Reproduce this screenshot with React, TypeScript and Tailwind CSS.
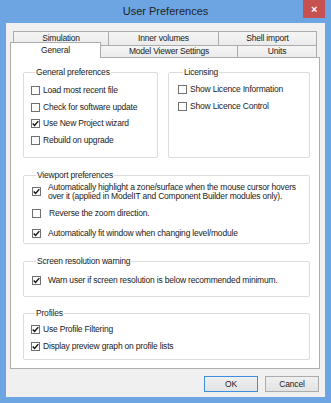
import React from "react";

function Check({ checked }: { checked?: boolean }) {
  return (
    <span className="w-[9px] h-[9px] shrink-0 border border-[#707070] bg-white flex items-center justify-center">
      {checked && (
        <svg width="7" height="7" viewBox="0 0 7 7">
          <path d="M0.7 3.5 L2.6 5.4 L6.3 1.1" fill="none" stroke="#111" strokeWidth="1.4" />
        </svg>
      )}
    </span>
  );
}

function Row({ checked, label, gap = "gap-[3px]", h = "h-[16.7px]" }: { checked?: boolean; label: React.ReactNode; gap?: string; h?: string }) {
  return (
    <div className={`flex items-center ${h} ${gap}`}>
      <Check checked={checked} />
      <span className="whitespace-nowrap leading-[9px]">{label}</span>
    </div>
  );
}

function Tab({ label, cls }: { label: string; cls: string }) {
  return (
    <div className={`flex items-center justify-center bg-gradient-to-b from-[#f5f5f5] to-[#ebebeb] border-[#acacac] ${cls}`}>
      <span className="whitespace-nowrap leading-[9px]">{label}</span>
    </div>
  );
}

export default function App() {
  return (
    <div className="w-[331px] h-[403px] bg-[#6ca5e2] flex flex-col font-['Liberation_Sans',Arial,sans-serif] text-[8.5px] tracking-[-0.2px] text-[#1b1b1b]">
      {/* title bar */}
      <div className="h-[23px] flex items-start">
        <div className="w-[28px]" />
        <div className="flex-1 h-[23px] flex items-center justify-center text-[11px] tracking-normal text-[#222]">User Preferences</div>
        <div className="w-[22px] h-[18px] mr-[6px] bg-[#c75050] flex items-center justify-center text-white text-[11px] font-bold leading-none">×</div>
      </div>
      {/* client */}
      <div className="mx-[6px] h-[374px] bg-[#f0f0f0] flex flex-col pt-[8px]">
        {/* tab row 1 */}
        <div className="flex h-[14px] ml-[7px]">
          <Tab label="Simulation" cls="w-[95px] border-l border-t" />
          <Tab label="Inner volumes" cls="w-[110px] border-l border-t" />
          <Tab label="Shell import" cls="w-[99px] border-l border-t border-r" />
        </div>
        {/* tab row 2 */}
        <div className="flex h-[12px] items-end ml-[4px]">
          <div className="relative z-10 w-[91px] h-[16px] -mb-[1px] bg-white border-l border-t border-r border-[#acacac] flex items-center justify-center">
            <span className="leading-[9px]">General</span>
          </div>
          <Tab label="Model Viewer Settings" cls="w-[137px] h-[12px] border-t border-r" />
          <Tab label="Units" cls="w-[79px] h-[12px] border-t border-r" />
        </div>
        {/* panel */}
        <div className="ml-[4px] w-[310px] h-[312px] bg-white border border-[#adadad] pt-[10px] pl-[12px] pr-[9px] flex flex-col">
          <div className="flex gap-[10px]">
            <fieldset className="w-[136px] border border-[#dcdcdc] rounded-[2px] pl-[7px] pt-[5px] pb-[8px]">
              <legend className="ml-[4px] px-[1px] leading-[9px]">General preferences</legend>
              <Row label="Load most recent file" />
              <Row label="Check for software update" />
              <Row checked label="Use New Project wizard" />
              <Row label="Rebuild on upgrade" />
            </fieldset>
            <fieldset className="w-[143px] border border-[#dcdcdc] rounded-[2px] pl-[9px] pt-[4px] pb-[7px]">
              <legend className="ml-[5px] px-[1px] leading-[9px]">Licensing</legend>
              <Row label="Show Licence Information" />
              <Row label="Show Licence Control" />
            </fieldset>
          </div>
          <fieldset className="mt-[13px] border border-[#dcdcdc] rounded-[2px] pl-[8px] pt-[3px] pb-[2px]">
            <legend className="ml-[4px] px-[1px] leading-[9px]">Viewport preferences</legend>
            <Row
              checked
              gap="gap-[7px]"
              h="h-[18px]"
              label={
                <>
                  Automatically highlight a zone/surface when the mouse cursor hovers
                  <br />
                  over it (applied in ModelIT and Component Builder modules only).
                </>
              }
            />
            <div className="mt-[4.5px]">
              <Row gap="gap-[8px]" h="h-[16px]" label="Reverse the zoom direction." />
            </div>
            <div className="mt-[4px]">
              <Row checked gap="gap-[7px]" h="h-[16px]" label="Automatically fit window when changing level/module" />
            </div>
          </fieldset>
          <fieldset className="mt-[12.5px] border border-[#dcdcdc] rounded-[2px] pl-[8px] pt-[6.5px] pb-[8px]">
            <legend className="ml-[4px] px-[1px] leading-[9px]">Screen resolution warning</legend>
            <Row checked gap="gap-[7px]" h="h-[16px]" label="Warn user if screen resolution is below recommended minimum." />
          </fieldset>
          <fieldset className="mt-[12px] border border-[#dcdcdc] rounded-[2px] pl-[7px] pt-[3px] pb-[4px]">
            <legend className="ml-[4px] px-[1px] leading-[9px]">Profiles</legend>
            <Row checked h="h-[17px]" label="Use Profile Filtering" />
            <Row checked h="h-[17px]" label="Display preview graph on profile lists" />
          </fieldset>
        </div>
        {/* buttons */}
        <div className="flex justify-end gap-[7px] mt-[7px] pr-[6px]">
          <button className="w-[54px] h-[16px] border border-[#3d8ee0] bg-gradient-to-b from-[#f0f0f0] to-[#e3e3e3] flex items-center justify-center leading-[9px]">OK</button>
          <button className="w-[54px] h-[16px] border border-[#acacac] bg-gradient-to-b from-[#f0f0f0] to-[#e3e3e3] flex items-center justify-center leading-[9px]">Cancel</button>
        </div>
      </div>
    </div>
  );
}
